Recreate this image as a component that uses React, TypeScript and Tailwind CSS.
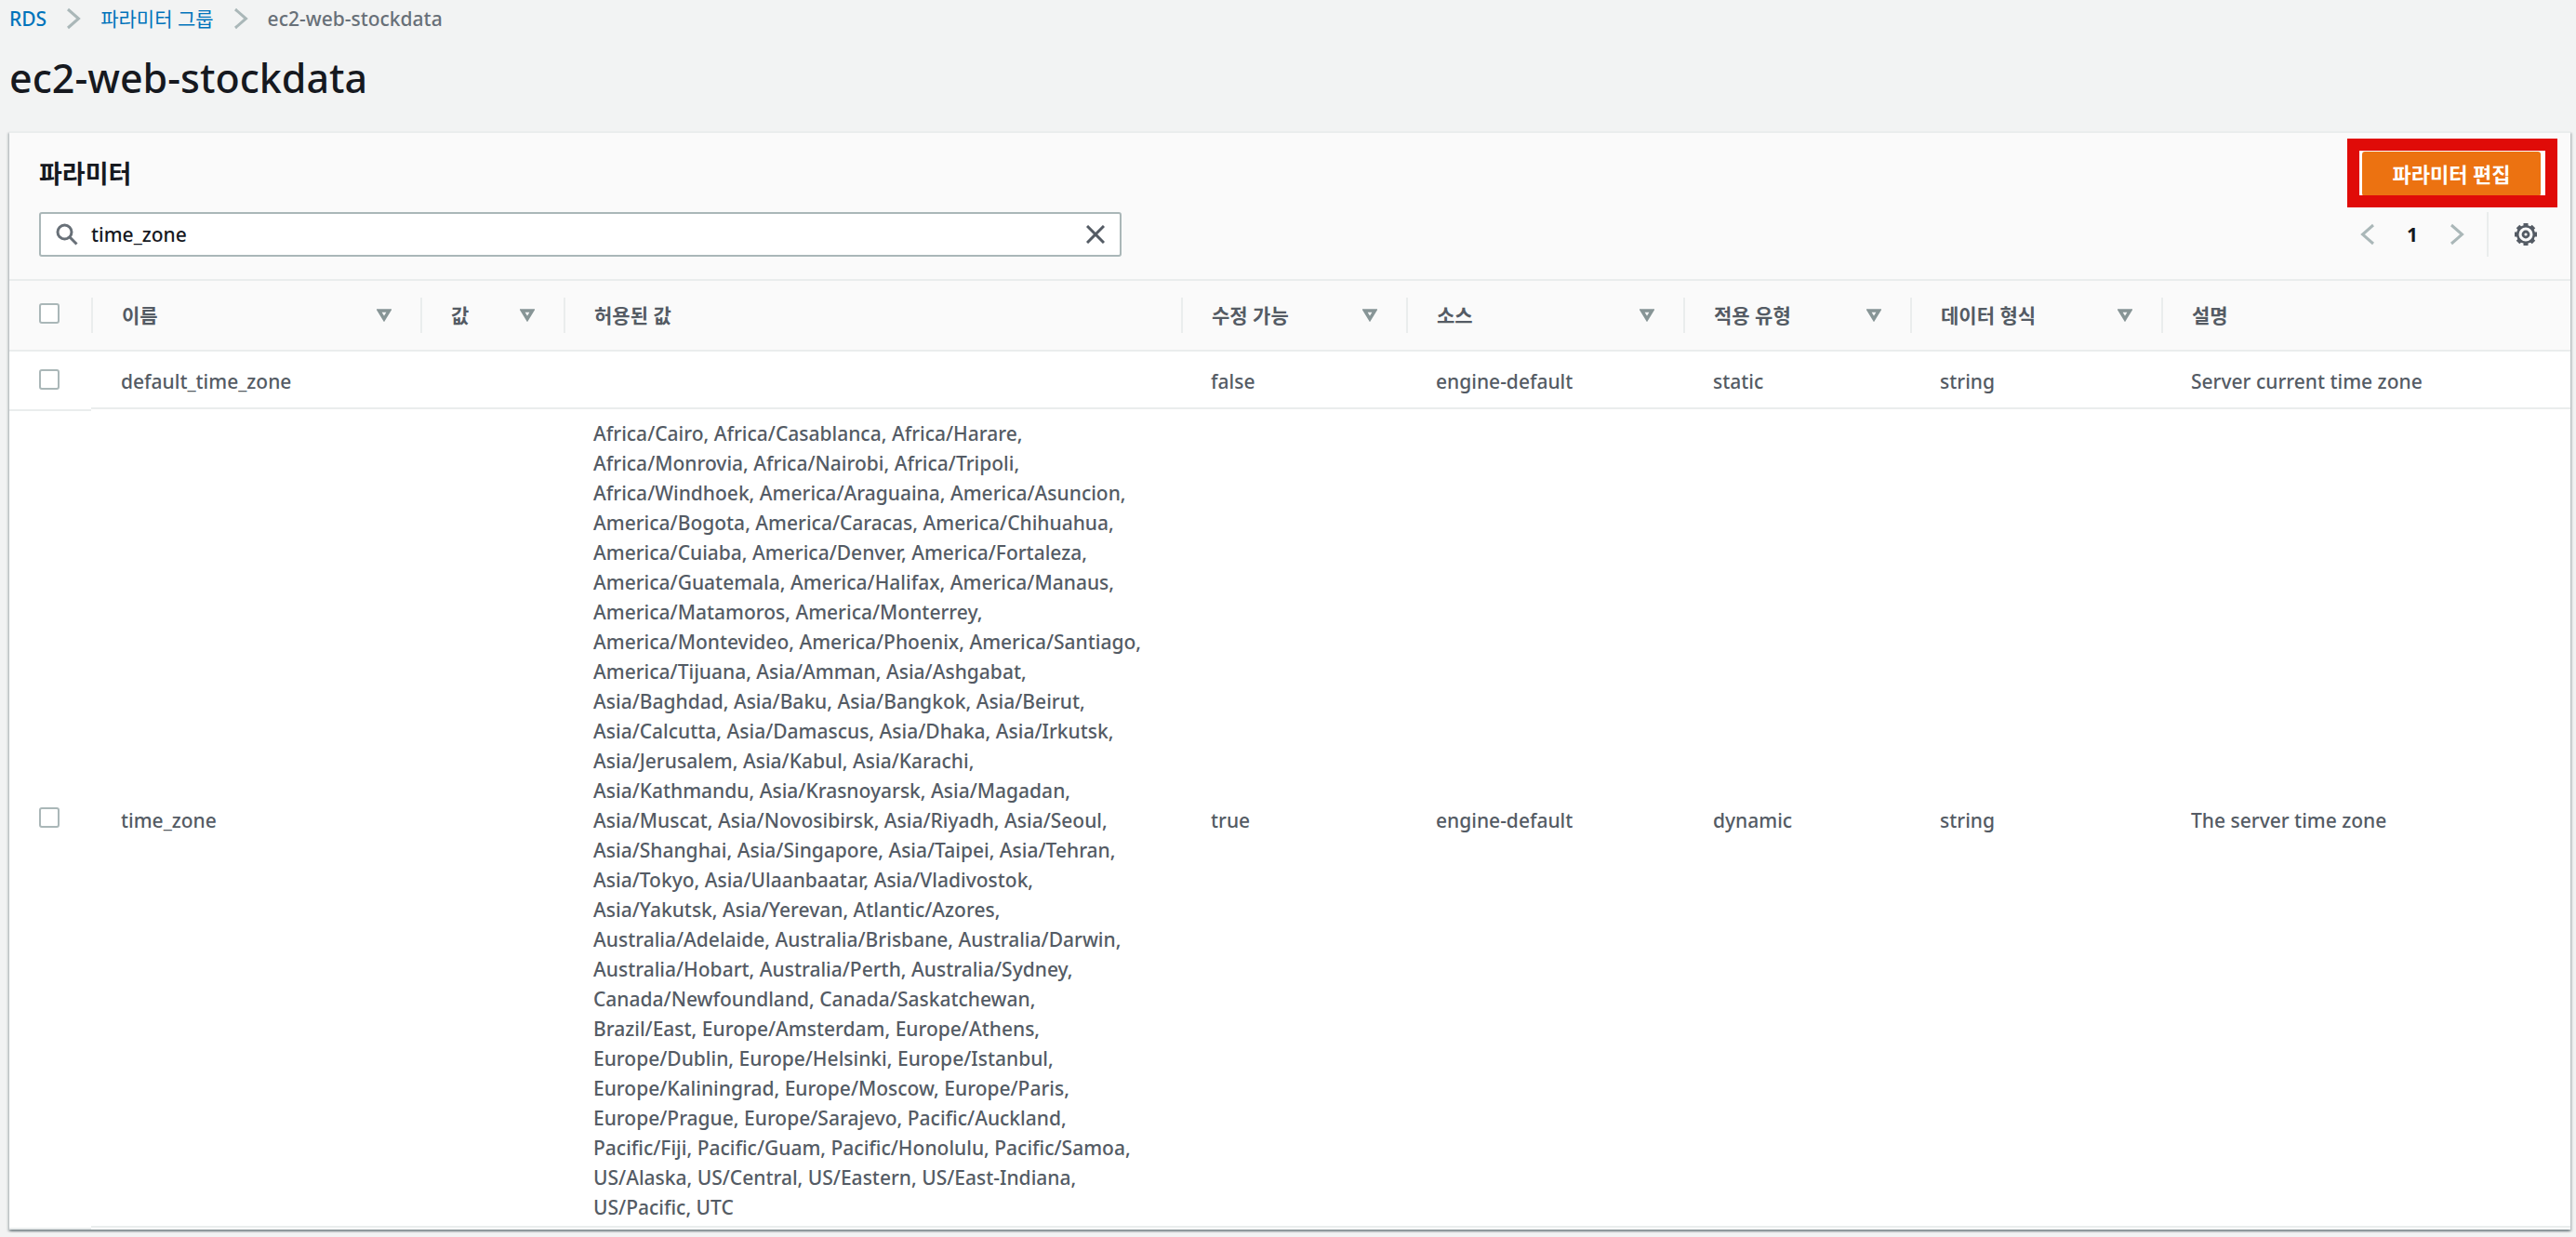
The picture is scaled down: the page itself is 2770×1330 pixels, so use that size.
import { useState } from "react";

const zones = `Africa/Cairo, Africa/Casablanca, Africa/Harare,
Africa/Monrovia, Africa/Nairobi, Africa/Tripoli,
Africa/Windhoek, America/Araguaina, America/Asuncion,
America/Bogota, America/Caracas, America/Chihuahua,
America/Cuiaba, America/Denver, America/Fortaleza,
America/Guatemala, America/Halifax, America/Manaus,
America/Matamoros, America/Monterrey,
America/Montevideo, America/Phoenix, America/Santiago,
America/Tijuana, Asia/Amman, Asia/Ashgabat,
Asia/Baghdad, Asia/Baku, Asia/Bangkok, Asia/Beirut,
Asia/Calcutta, Asia/Damascus, Asia/Dhaka, Asia/Irkutsk,
Asia/Jerusalem, Asia/Kabul, Asia/Karachi,
Asia/Kathmandu, Asia/Krasnoyarsk, Asia/Magadan,
Asia/Muscat, Asia/Novosibirsk, Asia/Riyadh, Asia/Seoul,
Asia/Shanghai, Asia/Singapore, Asia/Taipei, Asia/Tehran,
Asia/Tokyo, Asia/Ulaanbaatar, Asia/Vladivostok,
Asia/Yakutsk, Asia/Yerevan, Atlantic/Azores,
Australia/Adelaide, Australia/Brisbane, Australia/Darwin,
Australia/Hobart, Australia/Perth, Australia/Sydney,
Canada/Newfoundland, Canada/Saskatchewan,
Brazil/East, Europe/Amsterdam, Europe/Athens,
Europe/Dublin, Europe/Helsinki, Europe/Istanbul,
Europe/Kaliningrad, Europe/Moscow, Europe/Paris,
Europe/Prague, Europe/Sarajevo, Pacific/Auckland,
Pacific/Fiji, Pacific/Guam, Pacific/Honolulu, Pacific/Samoa,
US/Alaska, US/Central, US/Eastern, US/East-Indiana,
US/Pacific, UTC`;

const columns = [
  { label: "이름", width: "w-[354px]", sortable: true },
  { label: "값", width: "w-[154px]", sortable: true },
  { label: "허용된 값", width: "w-[664px]", sortable: false },
  { label: "수정 가능", width: "w-[242px]", sortable: true },
  { label: "소스", width: "w-[298px]", sortable: true },
  { label: "적용 유형", width: "w-[244px]", sortable: true },
  { label: "데이터 형식", width: "w-[270px]", sortable: true },
  { label: "설명", width: "", sortable: false },
];

const rows = [
  {
    cells: ["default_time_zone", "", "", "false", "engine-default", "static", "string", "Server current time zone"],
    padding: "pt-4 pb-3",
  },
  {
    cells: ["time_zone", "", zones, "true", "engine-default", "dynamic", "string", "The server time zone"],
    padding: "pt-[10px] pb-1",
  },
];

function Chevron({ flip = false }: { flip?: boolean }) {
  return (
    <svg
      aria-hidden="true"
      viewBox="0 0 16 24"
      className={flip ? "h-6 w-4 rotate-180" : "h-6 w-4"}
      fill="none"
      stroke="#aab7b8"
      strokeWidth="3"
    >
      <path d="M2 2l11.5 10L2 22" />
    </svg>
  );
}

function Gear() {
  return (
    <svg aria-hidden="true" viewBox="0 0 24 24" className="size-6" fill="none" stroke="#545b64">
      <circle cx="12" cy="12" r="8.8" strokeWidth="2.6" />
      {[0, 45, 90, 135].map((angle) => (
        <path key={angle} d="M12 0v3M12 21v3" strokeWidth="5" transform={`rotate(${angle} 12 12)`} />
      ))}
      <circle cx="12" cy="12" r="3" strokeWidth="2.8" />
    </svg>
  );
}

function Checkbox({ label }: { label: string }) {
  return (
    <input
      type="checkbox"
      aria-label={label}
      className="block size-[22px] appearance-none rounded-[3px] border-2 border-[#aab7b8] bg-white checked:bg-[#0073bb]"
    />
  );
}

export default function App() {
  const [query, setQuery] = useState("time_zone");

  return (
    <div className="min-h-screen bg-[#f2f3f3] pr-[6px] pb-2 pl-[10px] font-['Noto_Sans','Noto_Sans_CJK_KR',sans-serif] text-[21px] leading-8 font-medium text-[#545b64]">
      <nav aria-label="breadcrumb" className="flex h-10 items-center gap-[21px] font-normal">
        <a href="#rds" className="font-medium text-[#0073bb]">RDS</a>
        <Chevron />
        <a href="#groups" className="text-[#0073bb]">파라미터 그룹</a>
        <Chevron />
        <span className="font-medium text-[#687078]">ec2-web-stockdata</span>
      </nav>
      <h1 className="mt-4 text-[43px] leading-[56px] text-[#16191f]">ec2-web-stockdata</h1>

      <main className="mt-[29px] border-t-2 border-[#eaeded] bg-white pb-[2px] shadow-[0_2px_2px_0_rgba(0,28,36,0.3),2px_2px_2px_0_rgba(0,28,36,0.15),-2px_2px_2px_0_rgba(0,28,36,0.15)]">
        <header className="border-b-2 border-[#eaeded] bg-[#fafafa] pt-5 pr-7 pb-6 pl-8">
          <div className="flex h-12 items-center justify-between">
            <h2 className="text-[27px] font-bold text-[#16191f]">파라미터</h2>
            <div className="relative bg-white">
              <button type="button" className="mr-1 ml-[2px] h-12 w-[192px] rounded-[3px] bg-[#ec7211] text-[22px] font-bold text-white">
                파라미터 편집
              </button>
              <div className="pointer-events-none absolute -inset-x-[14px] -top-[14px] -bottom-3 border-[13px] border-[#e00b08]" />
            </div>
          </div>
          <div className="mt-[17px] flex h-12 items-center justify-between">
            <div className="flex h-12 w-[1164px] items-center rounded-[3px] border-2 border-[#aab7b8] bg-white pr-4 pl-4 text-[#16191f]">
              <svg aria-hidden="true" viewBox="0 0 24 24" className="size-6 shrink-0" fill="none" stroke="#687078" strokeWidth="3">
                <circle cx="9.5" cy="9.5" r="7.5" />
                <path d="M15 15l7.5 7.5" />
              </svg>
              <input
                type="text"
                aria-label="파라미터 필터"
                value={query}
                onChange={(e) => setQuery(e.target.value)}
                className="ml-[14px] min-w-0 flex-1 bg-transparent outline-none"
              />
              <button type="button" aria-label="지우기" onClick={() => setQuery("")}>
                <svg aria-hidden="true" viewBox="0 0 20 20" className="size-5" fill="none" stroke="#545b64" strokeWidth="3">
                  <path d="M1 1l18 18M19 1L1 19" />
                </svg>
              </button>
            </div>
            <div className="flex h-12 items-center pr-2">
              <button type="button" aria-label="이전 페이지"><Chevron flip /></button>
              <span className="w-20 text-center font-bold text-[#16191f]">1</span>
              <button type="button" aria-label="다음 페이지"><Chevron /></button>
              <div className="ml-6 h-12 w-[2px] bg-[#eaeded]" />
              <button type="button" aria-label="기본 설정" className="ml-7"><Gear /></button>
            </div>
          </div>
        </header>

        <table className="w-full table-fixed border-separate border-spacing-0 text-left">
          <thead className="bg-[#fafafa]">
            <tr>
              <th scope="col" className="h-[76px] w-[88px] border-b-2 border-[#eaeded] pb-1 pl-8 font-normal">
                <Checkbox label="모두 선택" />
              </th>
              {columns.map((c) => (
                <th key={c.label} scope="col" className={`${c.width} border-b-2 border-[#eaeded] p-0 font-bold`}>
                  <div className="flex h-[38px] items-center justify-between border-l-2 border-[#eaeded] pr-[31px] pl-[31px]">
                    <span>{c.label}</span>
                    {c.sortable && (
                      <button type="button" aria-label={`${c.label} 정렬`}>
                        <svg aria-hidden="true" viewBox="0 0 16 14" className="h-[14px] w-4" fill="none" stroke="#879596" strokeWidth="3.4">
                          <path d="M2.5 2h11L8 11z" />
                        </svg>
                      </button>
                    )}
                  </div>
                </th>
              ))}
            </tr>
          </thead>
          <tbody>
            {rows.map((r) => (
              <tr key={r.cells[0]}>
                <td className="pb-[2px] pl-8 align-middle shadow-[0_2px_0_#eaeded]">
                  <Checkbox label={`${r.cells[0]} 선택`} />
                </td>
                {r.cells.map((text, i) => (
                  <td
                    key={i}
                    className={`${r.padding} border-b-2 border-[#eaeded] pl-8 align-middle whitespace-pre-line`}
                  >
                    {text}
                  </td>
                ))}
              </tr>
            ))}
          </tbody>
        </table>
      </main>
    </div>
  );
}
